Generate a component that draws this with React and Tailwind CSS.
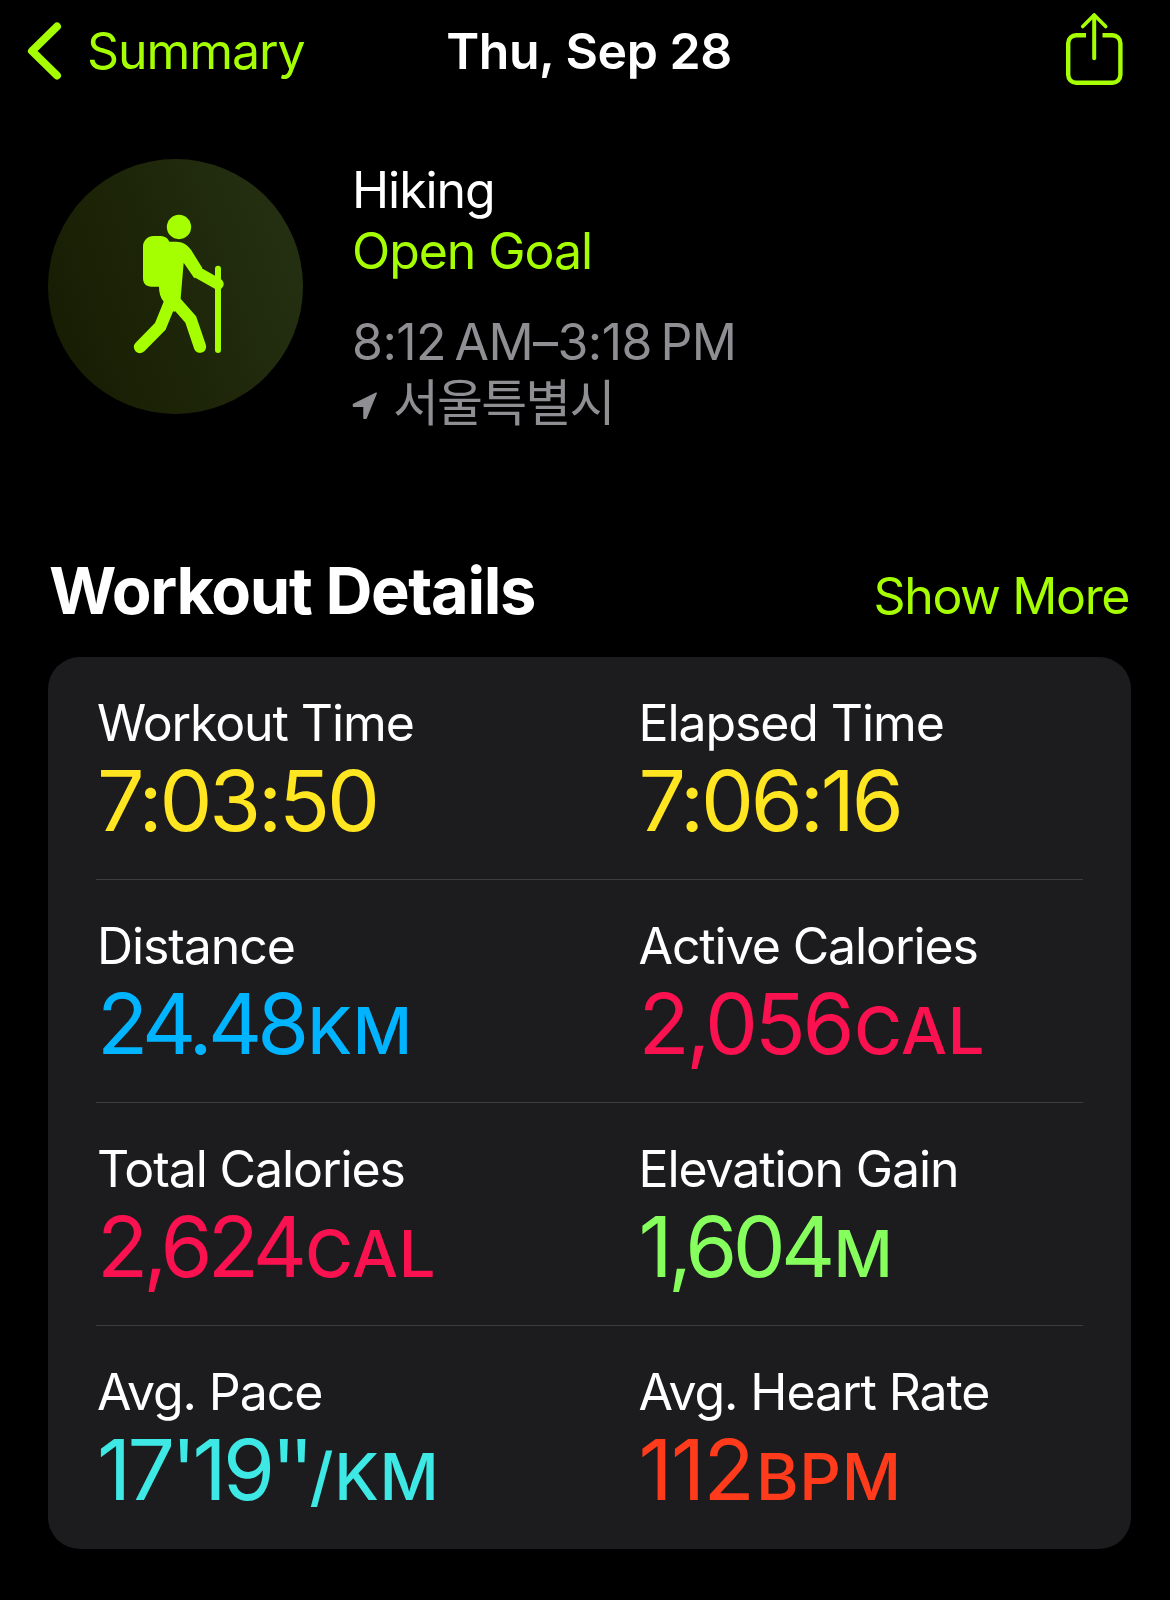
const stats = [
  { label: "Workout Time", value: "7:03:50", color: "text-[#ffe620]", spacing: "tracking-[-0.038em]" },
  { label: "Elapsed Time", value: "7:06:16", color: "text-[#ffe620]", spacing: "tracking-[-0.038em]" },
  { label: "Distance", value: "24.48", unit: "KM", color: "text-[#00b4ff]", spacing: "tracking-[-0.058em]" },
  { label: "Active Calories", value: "2,056", unit: "CAL", color: "text-[#fa114f]", spacing: "tracking-[-0.04em]" },
  { label: "Total Calories", value: "2,624", unit: "CAL", color: "text-[#fa114f]", spacing: "tracking-[-0.058em]" },
  { label: "Elevation Gain", value: "1,604", unit: "M", color: "text-[#86ff5e]", spacing: "tracking-[-0.056em]" },
  { label: "Avg. Pace", value: "17'19", seconds: "''", unit: "/KM", color: "text-[#3ee8e4]", spacing: "tracking-[-0.045em]" },
  { label: "Avg. Heart Rate", value: "112", unit: "BPM", color: "text-[#ff3b1c]", spacing: "tracking-[-0.02em]" },
];

const rows = [stats.slice(0, 2), stats.slice(2, 4), stats.slice(4, 6), stats.slice(6, 8)];

function ChevronIcon() {
  return (
    <svg width="36" height="60" viewBox="0 0 36 60" fill="none" stroke="currentColor" strokeWidth="8" strokeLinecap="round" strokeLinejoin="round">
      <path d="M31 5.5 6 30l25 24.5" />
    </svg>
  );
}

function ShareIcon() {
  return (
    <svg width="58" height="74" viewBox="0 0 58 74" fill="none" stroke="currentColor" strokeWidth="4.4" strokeLinecap="round" strokeLinejoin="round">
      <path d="M21 23.2H11.200a8 8 0 0 0-8 8V62.800a8 8 0 0 0 8 8h36.200a8 8 0 0 0 8-8V31.200a8 8 0 0 0-8-8H37.500" strokeLinecap="butt" />
      <path d="M29.200 46.300V3.400" strokeWidth="4" />
      <path d="M17.700 14.500 29.200 3l11.500 11.500" strokeWidth="3.600" />
    </svg>
  );
}

function HikerIcon() {
  return (
    <svg width="255" height="255" viewBox="54 57 765 765" fill="#a6ff00">
      <circle cx="447" cy="261" r="36.500" />
      {/* backpack, torso and upper arm */}
      <path d="M371 288h16c16 0 25 5 31 17h20c20 0 35 9 46 26l33 53-24 31-32-47-9 107-19 42-31-31c-11-13-15-29-15-46h-22c-16 0-26-9-26-26V320c0-18 14-32 32-32z" />
      {/* forearm and legs */}
      <g fill="none" stroke="#a6ff00" strokeWidth="37" strokeLinecap="round" strokeLinejoin="miter">
        <path d="M478 358 504 398l60 34" strokeWidth="34" />
        <path d="M419 490 391 559 330 621" />
        <path d="M436 486 482 538 510 620" />
      </g>
      {/* walking stick */}
      <path d="M564 386v244" stroke="#a6ff00" strokeWidth="18" strokeLinecap="round" />
    </svg>
  );
}

function LocationIcon() {
  return (
    <svg className="mt-[3px]" width="25" height="27" viewBox="0 0 25 27" fill="currentColor" stroke="currentColor" strokeWidth="1.500" strokeLinejoin="round">
      <path d="M24.200 1.200 1.500 12.500v1.700H12v12h2z" />
    </svg>
  );
}

function Stat({ label, value, seconds, unit, color, spacing }) {
  return (
    <div className="pl-[49px]">
      <p className="text-[50px] leading-[60px] tracking-[-0.022em] text-white">{label}</p>
      <p className={`mt-[3px] text-[84px] leading-[90px] ${spacing} ${color}`}>
        {value}
        {seconds && <span className="tracking-[-0.09em]">{seconds}</span>}
        {unit && <span className="ml-[3px] text-[65px] font-medium tracking-[0.01em]">{unit}</span>}
      </p>
    </div>
  );
}

export default function App() {
  return (
    <div className="h-[1600px] w-[1170px] overflow-hidden bg-black font-['Inter','Noto_Sans_CJK_KR',sans-serif] whitespace-nowrap text-white">
      <header className="grid h-[100px] grid-cols-[1fr_auto_1fr] items-center pt-[2px] pr-[47px] pl-[26px] text-[50px]">
        <button className="flex items-center gap-[25px] text-[#a6ff00]">
          <ChevronIcon />
          <span className="tracking-[-0.021em]">Summary</span>
        </button>
        <h1 className="pl-[29px] font-semibold tracking-[-0.01em]">Thu, Sep 28</h1>
        <button className="mb-1 justify-self-end text-[#a6ff00]">
          <ShareIcon />
        </button>
      </header>

      <section className="flex px-12 pt-[59px]">
        <div className="size-[255px] rounded-full bg-linear-70 from-[#161b02] to-[#263214]">
          <HikerIcon />
        </div>
        <div className="pt-px pl-[49px] text-[50px] leading-[61px] tracking-[-0.021em]">
          <p>Hiking</p>
          <p className="text-[#a6ff00]">Open Goal</p>
          <p className="mt-[30px] tracking-[-0.011em] text-[#8e8e93]">8:12{"\u202f"}AM–3:18{"\u202f"}PM</p>
          <p className="flex items-center gap-[16px] text-[#8e8e93]">
            <LocationIcon />
            <span className="tracking-[-0.038em]">서울특별시</span>
          </p>
        </div>
      </section>

      <section className="px-12">
        <div className="mt-[117px] flex items-baseline justify-between">
          <h2 className="pl-px text-[65px] leading-[80px] font-bold tracking-[-0.021em]">Workout Details</h2>
          <button className="-mr-[7px] text-[50px] tracking-[-0.028em] text-[#a6ff00]">Show More</button>
        </div>
        <div className="mt-[23px] w-[1083px] rounded-[32px] bg-[#1c1c1e]">
          {rows.map((row, i) => (
            <div key={i} className="h-[223px]">
              <div className="grid h-[222px] grid-cols-2 pt-9">
                {row.map((s) => (
                  <Stat key={s.label} {...s} />
                ))}
              </div>
              {i < rows.length - 1 && <div className="mx-12 h-px bg-[#3d3d40]" />}
            </div>
          ))}
        </div>
      </section>
    </div>
  );
}
